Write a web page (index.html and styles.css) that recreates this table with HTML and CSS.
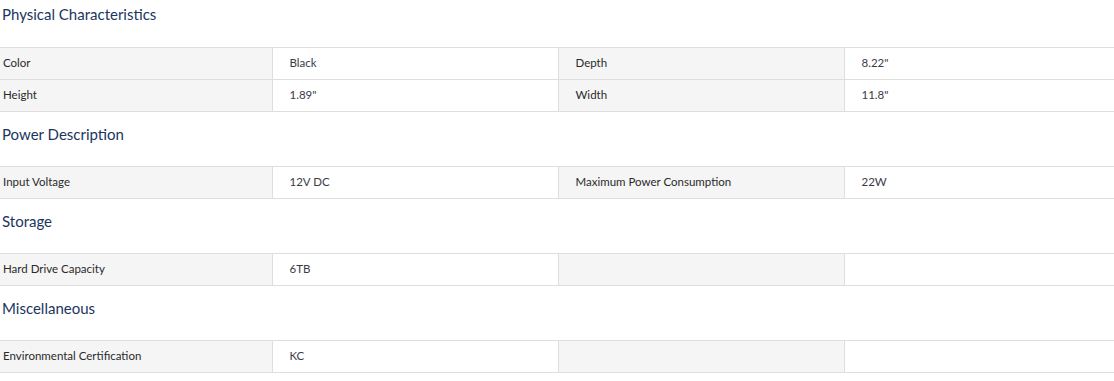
FILE: index.html
```html
<!DOCTYPE html>
<html lang="en">

<head>
  <meta charset="UTF-8">
  <meta name="viewport" content="width=device-width, initial-scale=1.0">
  <title>Specifications</title>
  <link rel="stylesheet" href="styles.css">
</head>

<body>
  <section class="spec-group first">
    <h3>Physical Characteristics</h3>
    <table class="spec-table">
      <colgroup>
        <col class="c1"><col class="c2"><col class="c3"><col class="c4">
      </colgroup>
      <tr>
        <td class="label first-col">Color</td>
        <td>Black</td>
        <td class="label">Depth</td>
        <td>8.22"</td>
      </tr>
      <tr>
        <td class="label first-col">Height</td>
        <td>1.89"</td>
        <td class="label">Width</td>
        <td>11.8"</td>
      </tr>
    </table>
  </section>

  <section class="spec-group">
    <h3>Power Description</h3>
    <table class="spec-table">
      <colgroup>
        <col class="c1"><col class="c2"><col class="c3"><col class="c4">
      </colgroup>
      <tr>
        <td class="label first-col">Input Voltage</td>
        <td>12V DC</td>
        <td class="label">Maximum Power Consumption</td>
        <td>22W</td>
      </tr>
    </table>
  </section>

  <section class="spec-group">
    <h3>Storage</h3>
    <table class="spec-table">
      <colgroup>
        <col class="c1"><col class="c2"><col class="c3"><col class="c4">
      </colgroup>
      <tr>
        <td class="label first-col">Hard Drive Capacity</td>
        <td>6TB</td>
        <td class="label"></td>
        <td></td>
      </tr>
    </table>
  </section>

  <section class="spec-group">
    <h3>Miscellaneous</h3>
    <table class="spec-table">
      <colgroup>
        <col class="c1"><col class="c2"><col class="c3"><col class="c4">
      </colgroup>
      <tr>
        <td class="label first-col">Environmental Certification</td>
        <td>KC</td>
        <td class="label"></td>
        <td></td>
      </tr>
    </table>
  </section>
</body>

</html>
```

FILE: styles.css
```css
* {
  font-family: Lato, 'Noto Sans', sans-serif;
  box-sizing: border-box;
}

body {
  margin: 0;
  background: #fff;
  overflow: hidden;
}

.spec-group>h3 {
  margin: 0;
  padding: 12px 0 0 2px;
  height: 54px;
  font-size: 15px;
  font-weight: 400;
  line-height: 20px;
  color: #1a3560;
}

.spec-group.first>h3 {
  padding-top: 4px;
  height: 47px;
}

table.spec-table {
  width: 1114px;
  border-collapse: collapse;
  table-layout: fixed;
}

table.spec-table col.c1 {
  width: 272px;
}

table.spec-table col.c2,
table.spec-table col.c3 {
  width: 286px;
}

table.spec-table col.c4 {
  width: 270px;
}

table.spec-table td {
  height: 32px;
  padding: 0 0 2px 17px;
  border: 1px solid #dedede;
  font-size: 11.5px;
  color: #3c3c46;
  vertical-align: middle;
}

table.spec-table td.label {
  background-color: #f5f5f5;
  color: #2a2a2a;
}

table.spec-table td.first-col {
  padding-left: 3px;
  border-left: none;
}

table.spec-table td:last-child {
  border-right: none;
}
```
